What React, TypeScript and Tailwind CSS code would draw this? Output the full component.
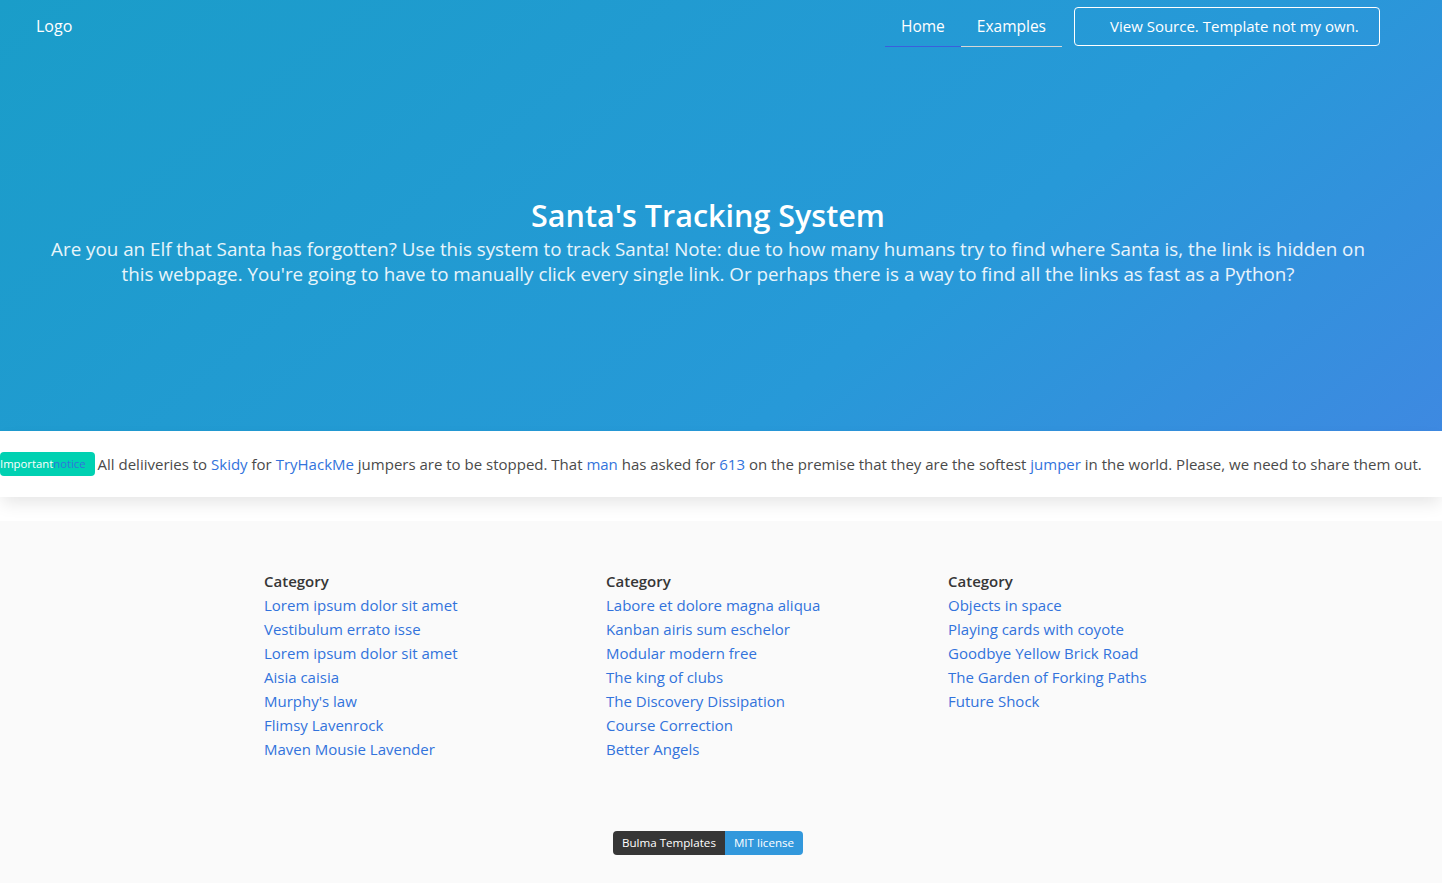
import React from "react";

const col1 = [
  "Lorem ipsum dolor sit amet",
  "Vestibulum errato isse",
  "Lorem ipsum dolor sit amet",
  "Aisia caisia",
  "Murphy's law",
  "Flimsy Lavenrock",
  "Maven Mousie Lavender",
];
const col2 = [
  "Labore et dolore magna aliqua",
  "Kanban airis sum eschelor",
  "Modular modern free",
  "The king of clubs",
  "The Discovery Dissipation",
  "Course Correction",
  "Better Angels",
];
const col3 = [
  "Objects in space",
  "Playing cards with coyote",
  "Goodbye Yellow Brick Road",
  "The Garden of Forking Paths",
  "Future Shock",
];

function Column({ items }: { items: string[] }) {
  return (
    <div className="w-[342px] flex flex-col">
      <p className="font-semibold text-[#363636] leading-6">Category</p>
      <ul className="flex flex-col">
        {items.map((t, i) => (
          <li key={i} className="leading-6">
            <a className="text-[#3273dc]" href="#">
              {t}
            </a>
          </li>
        ))}
      </ul>
    </div>
  );
}

export default function App() {
  return (
    <div
      className="min-h-[883px] bg-white text-[#4a4a4a] text-[15px]"
      style={{ fontFamily: "'Open Sans', 'Noto Sans', sans-serif" }}
    >
      <section className="h-[431px] flex flex-col text-white bg-[linear-gradient(141deg,#1a9dc9_0%,#2799d8_65%,#3e89e1_100%)]">
        <nav className="h-[52px] flex items-stretch pl-[36px] pr-[62px]">
          <div className="flex items-center text-[16px]">Logo</div>
          <div className="ml-auto flex items-stretch">
            <a className="px-4 flex items-center border-b border-[#3b5fdc] h-[47px] pt-[8px] text-[15.5px]">Home</a>
            <a className="px-4 flex items-center border-b border-[#d6d6d6] h-[47px] pt-[8px] text-[15.5px]">Examples</a>
            <div className="flex items-center ml-3">
              <a className="h-[39px] w-[306px] border border-white rounded-[4px] flex items-center pl-[35px] whitespace-nowrap">
                View Source. Template not my own.
              </a>
            </div>
          </div>
        </nav>
        <div className="flex-1 flex flex-col items-center justify-center text-center pl-12 pr-[74px] pb-[1px]">
          <h1 className="text-[30.5px] font-semibold leading-[40px]">Santa's Tracking System</h1>
          <h2 className="text-[18.8px] leading-[25px] text-white/90 max-w-[1344px] mt-[2px]">
            Are you an Elf that Santa has forgotten? Use this system to track Santa! Note: due to how many humans try
            to find where Santa is, the link is hidden on this webpage. You're going to have to manually click every
            single link. Or perhaps there is a way to find all the links as fast as a Python?
          </h2>
        </div>
      </section>

      <div className="bg-white py-[21px] shadow-[0_8px_16px_-2px_rgba(10,10,10,0.1)] mb-6 flex items-center">
        <span className="inline-flex items-center h-6 bg-[#00d1b2] rounded-[4px] pr-[9px] text-[11.3px] mr-[3px]">
          <span className="text-white">Important</span>
          <span className="text-[#3273dc]">notice</span>
        </span>
        <p className="leading-6 whitespace-nowrap">
          All deliiveries to <a className="text-[#3273dc]">Skidy</a> for <a className="text-[#3273dc]">TryHackMe</a>{" "}
          jumpers are to be stopped. That <a className="text-[#3273dc]">man</a> has asked for{" "}
          <a className="text-[#3273dc]">613</a> on the premise that they are the softest{" "}
          <a className="text-[#3273dc]">jumper</a> in the world. Please, we need to share them out.
        </p>
      </div>

      <footer className="bg-[#fafafa] pt-12 pb-[28px] h-[362px]">
        <div className="flex ml-[264px]">
          <Column items={col1} />
          <Column items={col2} />
          <Column items={col3} />
        </div>
        <div className="flex justify-center mt-[70px] pr-[26px]">
          <div className="flex text-[11.6px] h-6 items-center">
            <span className="bg-[#363636] text-white h-6 flex items-center px-[9px] rounded-l-[4px]">Bulma Templates</span>
            <span className="bg-[#3298dc] text-white h-6 flex items-center px-[9px] rounded-r-[4px]">MIT license</span>
          </div>
        </div>
      </footer>
    </div>
  );
}
